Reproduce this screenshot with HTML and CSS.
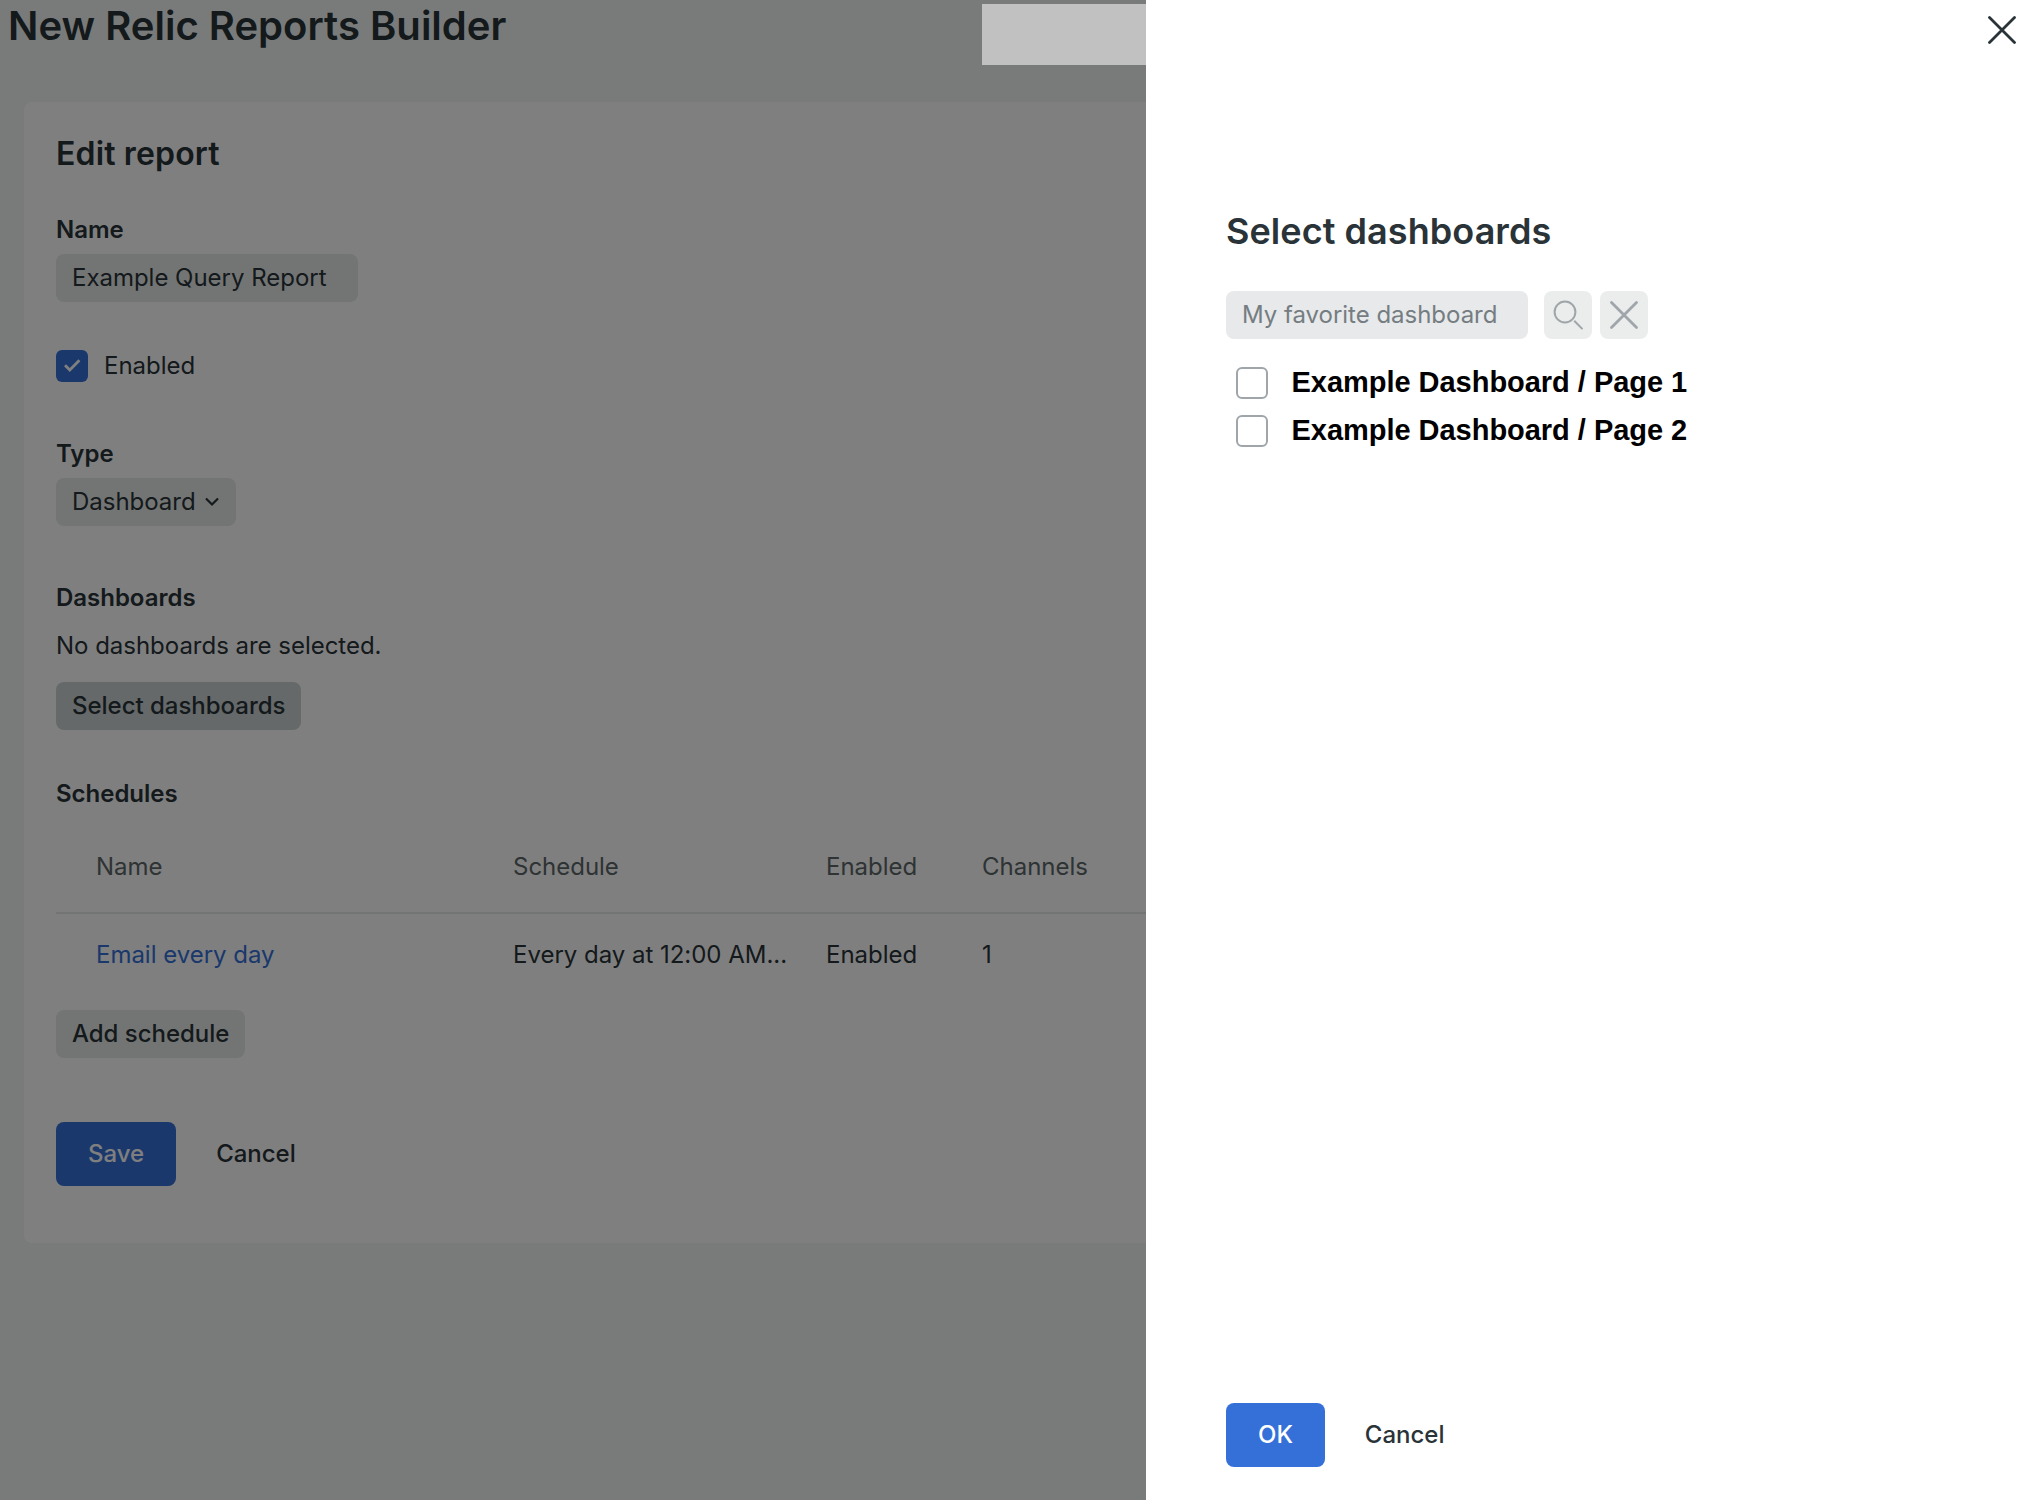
FILE: index.html
```html
<!DOCTYPE html>
<html lang="en">
<head>
<meta charset="utf-8">
<title>New Relic Reports Builder</title>
<link rel="stylesheet" href="styles.css">
</head>
<body>
<main class="page">
  <h1 class="page-title">New Relic Reports Builder</h1>
  <section class="card">
    <h2 class="card-title">Edit report</h2>
    <div class="field field-name">
      <div class="label">Name</div>
      <div class="input">Example Query Report</div>
    </div>
    <div class="check-row">
      <span class="checkbox checked"><svg width="32" height="32" viewBox="0 0 32 32"><path d="M9 15.2l4.8 4.8L23.4 10.2" fill="none" stroke="#fff" stroke-width="2.8"/></svg></span>
      <span>Enabled</span>
    </div>
    <div class="field field-type">
      <div class="label">Type</div>
      <div class="select"><span>Dashboard</span><svg width="14" height="10" viewBox="0 0 14 10"><path d="M1 1.5l6 6 6-6" fill="none" stroke="#293338" stroke-width="2.2"/></svg></div>
    </div>
    <div class="field field-dashboards">
      <div class="label">Dashboards</div>
      <p class="empty">No dashboards are selected.</p>
      <button class="btn btn-active">Select dashboards</button>
    </div>
    <div class="field field-schedules">
      <div class="label">Schedules</div>
      <div class="table">
        <div class="row head"><span>Name</span><span>Schedule</span><span>Enabled</span><span>Channels</span></div>
        <div class="row"><span class="link">Email every day</span><span>Every day at 12:00 AM...</span><span>Enabled</span><span>1</span></div>
      </div>
      <button class="btn">Add schedule</button>
    </div>
    <div class="actions">
      <button class="btn-primary">Save</button>
      <button class="btn-plain">Cancel</button>
    </div>
  </section>
</main>
<div class="overlay"></div>
<div class="mask"></div>
<aside class="drawer">
  <svg class="close" width="28" height="28" viewBox="0 0 28 28"><path d="M1.5 1.5l25 25M26.5 1.5l-25 25" fill="none" stroke="#293338" stroke-width="2.8" stroke-linecap="round"/></svg>
  <h2 class="drawer-title">Select dashboards</h2>
  <div class="search">
    <div class="input placeholder">My favorite dashboard</div>
    <button class="icon-btn"><svg width="48" height="48" viewBox="0 0 48 48"><g fill="none" stroke="#9fa5a8" stroke-width="2"><circle cx="21" cy="21" r="10.4"/><path d="M30.2 29.8l8.3 8.3"/></g></svg></button>
    <button class="icon-btn"><svg width="48" height="48" viewBox="0 0 48 48"><path d="M11.5 11.5l25 25M36.5 11.5l-25 25" fill="none" stroke="#9fa5a8" stroke-width="2.8" stroke-linecap="round"/></svg></button>
  </div>
  <div class="list">
    <div class="item"><span class="checkbox"></span><span class="item-name">Example Dashboard / Page 1</span></div>
    <div class="item"><span class="checkbox"></span><span class="item-name">Example Dashboard / Page 2</span></div>
  </div>
  <div class="actions drawer-actions">
    <button class="btn-primary">OK</button>
    <button class="btn-plain">Cancel</button>
  </div>
</aside>
</body>
</html>
```
FILE: styles.css
```css
* { box-sizing: border-box; margin: 0; }
body {
  position: relative;
  height: 1500px;
  overflow: hidden;
  background: #f3f6f4;
  color: #293338;
  font: 400 24px/32px Inter, "Liberation Sans", sans-serif;
  letter-spacing: -0.02px;
}
button { font: inherit; font-weight: 500; letter-spacing: inherit; color: inherit; border: 0; padding: 0; background: none; display: block; white-space: nowrap; }
svg { display: block; flex: none; }
.page { height: 1500px; }
.page-title { height: 102px; padding: 2px 0 0 8px; font-size: 40px; line-height: 48px; font-weight: 600; letter-spacing: 0.02px; }
.card { margin-left: 24px; height: 1141px; padding: 32px; background: #fff; border-radius: 8px; }
.card-title { font-size: 32px; line-height: 40px; font-weight: 600; letter-spacing: 0.15px; }
.label { font-weight: 600; line-height: 32px; }
.field-name { margin-top: 40px; }
.input { width: 302px; height: 48px; margin-top: 8px; padding: 8px 16px; border-radius: 8px; background: #e7e9ea; white-space: nowrap; }
.card .input, .select, .btn { background: #e6eae9; }
.check-row { display: flex; gap: 16px; margin-top: 48px; }
.checkbox { width: 32px; height: 32px; border-radius: 6px; border: 2px solid #9fa5a8; flex: none; }
.checked { border: 0; background: #3470d8; }
.field-type { margin-top: 56px; }
.select { display: flex; align-items: center; gap: 9px; height: 48px; width: 180px; margin-top: 8px; padding: 0 16px; border-radius: 8px; }
.field-dashboards { margin-top: 56px; }
.empty { margin: 16px 0 20px; }
.btn { height: 48px; padding: 0 16px; border-radius: 8px; }
.card .btn-active { background: #cbd2d3; }
.field-schedules { margin-top: 48px; }
.row { display: grid; grid-template-columns: 417px 313px 156px 1fr; padding: 0 0 2px 40px; height: 84px; align-items: center; }
.head { height: 96px; margin-top: 8px; padding: 4px 0 0 40px; color: #5c6669; border-bottom: 2px solid #e6e8e8; }
.link { color: #3470d8; }
.table + .btn { margin-top: 12px; }
.actions { display: flex; gap: 40px; margin-top: 64px; }
.btn-primary { height: 64px; padding: 0 32px; color: #fff; background: #3470d8; border-radius: 8px; }
.overlay { position: absolute; inset: 0; background: rgba(0, 0, 0, 0.5); }
.mask { position: absolute; left: 982px; top: 4px; width: 200px; height: 61px; background: #c1c1c1; }
.drawer { position: absolute; top: 0; right: 0; width: 878px; height: 1500px; padding: 16px 8px 33px 80px; background: #fff; display: flex; flex-direction: column; }
.close { align-self: flex-end; }
.drawer-title { margin-top: 163px; font-size: 36px; line-height: 48px; font-weight: 600; letter-spacing: 0.06px; }
.search { display: flex; gap: 8px; margin-top: 36px; }
.search .input { margin: 0 8px 0 0; }
.placeholder { color: #757d82; }
.icon-btn { width: 48px; height: 48px; border-radius: 8px; background: #ebedec; }
.list { margin-top: 20px; padding-left: 10px; font: 700 29px/48px "Liberation Sans", sans-serif; letter-spacing: -0.03px; color: #000; }
.item { display: flex; align-items: center; gap: 23.5px; height: 48px; }
.item-name { padding-bottom: 2px; }
.drawer-actions { margin-top: auto; }
```
